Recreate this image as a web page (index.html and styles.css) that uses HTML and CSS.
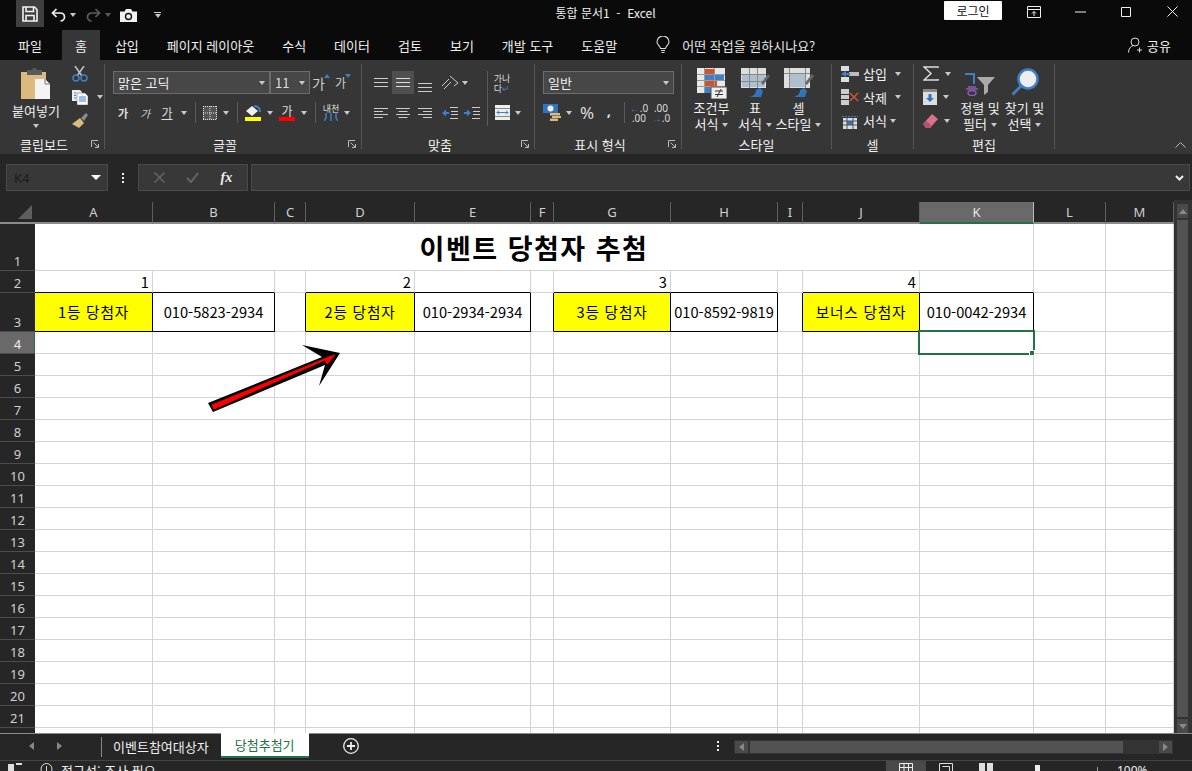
FILE: index.html
```html
<!DOCTYPE html>
<html lang="ko">
<head>
    <meta charset="UTF-8">
    <meta name="viewport" content="width=device-width, initial-scale=1.0">
    <title>통합 문서1 - Excel</title>
    <link rel="stylesheet" href="styles.css">
</head>
<body>
    <header class="titlebar">
        <div class="qat">
            <span class="qat-save">
                <svg width="16" height="16" viewBox="0 0 16 16" fill="none" stroke="#f2f2f2" stroke-width="1.6"><path d="M1 1h11.5L15 3.500V15H1z"/><path d="M4 1v4.500h7.500V1M4 15V9.500h8V15"/></svg>
            </span>
            <svg class="qat-undo" width="15" height="14" viewBox="0 0 15 14" fill="none" stroke="#f2f2f2" stroke-width="1.7"><path d="M5.500 1 1.500 5l4 4"/><path d="M2 5h7c3 0 4.500 2 4.500 4S12 13 9.500 13"/></svg>
            <i class="caret caret-qat"></i>
            <svg class="qat-redo" width="15" height="14" viewBox="0 0 15 14" fill="none" stroke="#5c5c5c" stroke-width="1.7"><path d="M9.500 1l4 4-4 4"/><path d="M13 5H6C3 5 1.500 7 1.500 9S3 13 5.500 13"/></svg>
            <i class="caret caret-qat dim"></i>
            <svg class="qat-cam" width="17" height="13" viewBox="0 0 17 13"><path d="M0 2.500h4.500L6 0h5l1.500 2.500H17V13H0z" fill="#f2f2f2"/><circle cx="8.500" cy="7.500" r="3" fill="none" stroke="#111" stroke-width="1.400"/></svg>
            <span class="qat-more"><b></b><i class="caret"></i></span>
        </div>
        <div class="doc-title">통합 문서1 &nbsp;-&nbsp; Excel</div>
        <div class="win">
            <button class="login">로그인</button>
            <span class="win-btn"><svg width="14" height="12" viewBox="0 0 14 12" fill="none" stroke="#eee"><path d="M.5.500h13v11H.5zM.5 3.500h13"/><path d="M7 10V5.500M5 7.500l2-2 2 2"/></svg></span>
            <span class="win-btn"><svg width="11" height="2" viewBox="0 0 11 2"><path d="M0 1h11" stroke="#eee"/></svg></span>
            <span class="win-btn"><svg width="10" height="10" viewBox="0 0 10 10"><path d="M.5.500h9v9h-9z" fill="none" stroke="#eee"/></svg></span>
            <span class="win-btn"><svg width="11" height="11" viewBox="0 0 11 11"><path d="M.5.500l10 10M10.500.500l-10 10" stroke="#eee"/></svg></span>
        </div>
    </header>

    <nav class="tabs">
        <span class="tab tab-file">파일</span>
        <span class="tab active">홈</span>
        <span class="tab">삽입</span>
        <span class="tab">페이지 레이아웃</span>
        <span class="tab">수식</span>
        <span class="tab">데이터</span>
        <span class="tab">검토</span>
        <span class="tab">보기</span>
        <span class="tab">개발 도구</span>
        <span class="tab">도움말</span>
        <span class="tell">
            <svg width="14" height="18" viewBox="0 0 14 18" fill="none" stroke="#ddd" stroke-width="1.100"><path d="M4.500 12.500C4 9.500 1 9 1 6a6 6 0 0 1 12 0c0 3-3 3.500-3.500 6.500z"/><path d="M5 14.500h4M5.500 16.500h3"/></svg>
            어떤 작업을 원하시나요?
        </span>
        <span class="share">
            <svg width="15" height="16" viewBox="0 0 15 16" fill="none" stroke="#ddd"><circle cx="7" cy="5" r="4"/><path d="M.5 15.500c0-4 2.500-6.500 5-7M11.500 10.500v5M9 13h5"/></svg>
            공유
        </span>
    </nav>

    <section class="ribbon">
        <div class="group g-clip">
            <div class="body clip-body">
                <div class="paste">
                    <svg width="30" height="31" viewBox="0 0 30 31"><path d="M0 4h25v27H0z" fill="#dcb97c"/><path d="M6 2h5l1-2h3l1 2h5v5H6z" fill="#5a5a5a"/><path d="M14 11h10l5 5v15H14z" fill="#f4f4f4"/><path d="M24 11v5h5" fill="none" stroke="#777"/></svg>
                    <span>붙여넣기</span>
                    <i class="caret"></i>
                </div>
                <div class="clip-tools">
                    <span class="clip-row"><svg width="16" height="16" viewBox="0 0 16 16" fill="none"><path d="M3 0l7 10M12 0 5 10" stroke="#c4c4c4" stroke-width="1.500"/><circle cx="4" cy="12" r="3" stroke="#3d80c8" stroke-width="1.500"/><circle cx="12" cy="12" r="3" stroke="#3d80c8" stroke-width="1.500"/></svg></span>
                    <span class="clip-row"><svg width="16" height="15" viewBox="0 0 16 15"><path d="M0 0h8l2 2v9H0z" fill="#eee"/><path d="M5 3h8l3 3v9H5z" fill="#fff" stroke="#555" stroke-width=".5"/><path d="M2 3h2M2 5.500h2M2 8h2M7 7h7M7 9h7M7 11h7" stroke="#3d80c8"/></svg><i class="caret caret-gap"></i></span>
                    <span class="clip-row"><svg width="16" height="15" viewBox="0 0 16 15"><path d="M0 11l8-6 4 5-5 5z" fill="#dcb97c"/><path d="M9 5l5-5 2 2-4 6z" fill="#8a8a8a"/></svg></span>
                </div>
            </div>
            <div class="foot"><span class="label">클립보드</span><span class="launcher"><svg width="8" height="8" viewBox="0 0 8 8" fill="none" stroke="#bbb"><path d="M.5 7V.5H7M2.500 2.500 7 7M4 7.500h3.500V4"/></svg></span></div>
        </div>

        <div class="group g-font">
            <div class="body">
                <div class="row row-top font-top">
                    <div class="select font-name"><span>맑은 고딕</span><i class="caret"></i></div>
                    <div class="select font-size"><span>11</span><i class="caret"></i></div>
                    <span class="tool w22 size-btn">가<i class="tri up"></i></span>
                    <span class="tool w22 size-btn small">가<i class="tri down"></i></span>
                </div>
                <div class="row row-low">
                    <span class="tool w22 fs-b">가</span>
                    <span class="tool w22 fs-i">가</span>
                    <span class="tool w22 fs-u">가</span>
                    <span class="tool w12"><i class="caret"></i></span>
                    <b class="sep sep-a"></b>
                    <span class="tool w20"><svg width="14" height="14" viewBox="0 0 14 14"><path d="M0 0h14v14H0z" fill="#555"/><path d="M0 .5h14M0 13.500h14M.5 0v14M13.500 0v14M7 0v14M0 7h14" stroke="#e4e4e4" stroke-dasharray="1 1"/></svg></span>
                    <span class="tool w12"><i class="caret"></i></span>
                    <b class="sep sep-b"></b>
                    <span class="tool w22 stack"><svg width="16" height="11" viewBox="0 0 16 11"><path d="M1 6l6-5 6 5-6 5z" fill="#f0f0f0"/><path d="M9 1c4 0 6 2 6 6" fill="none" stroke="#3d80c8" stroke-width="2"/></svg><i class="swatch yellow"></i></span>
                    <span class="tool w12"><i class="caret"></i></span>
                    <span class="tool w22 stack"><em class="swatch-text">가</em><i class="swatch red"></i></span>
                    <span class="tool w12"><i class="caret"></i></span>
                    <b class="sep sep-c"></b>
                    <span class="tool w20 stack"><em class="mini-text">내천</em><svg width="14" height="8" viewBox="0 0 14 8"><path d="M2 0v5L0 8M7 0v8M12 0v5l2 3" stroke="#3d80c8" stroke-width="1.500" fill="none"/></svg></span>
                    <span class="tool w12"><i class="caret"></i></span>
                </div>
            </div>
            <div class="foot"><span class="label">글꼴</span><span class="launcher"><svg width="8" height="8" viewBox="0 0 8 8" fill="none" stroke="#bbb"><path d="M.5 7V.5H7M2.500 2.500 7 7M4 7.500h3.500V4"/></svg></span></div>
        </div>

        <div class="group g-align">
            <div class="body align-body">
                <div class="align-left">
                    <div class="row row-top">
                        <span class="tool w22"><svg width="14" height="9" viewBox="0 0 14 9"><path d="M0 .5h14M0 4.500h14M0 8.500h14" stroke="#ccc"/></svg></span>
                        <span class="tool w22 on"><svg width="14" height="9" viewBox="0 0 14 9"><path d="M0 .5h14M0 4.500h14M0 8.500h14" stroke="#ddd"/></svg></span>
                        <span class="tool w22 v-low"><svg width="14" height="9" viewBox="0 0 14 9"><path d="M0 .5h14M0 4.500h14M0 8.500h14" stroke="#ccc"/></svg></span>
                        <span class="tool w20 orient"><svg width="18" height="16" viewBox="0 0 18 16" fill="none"><path d="M1 11l7-7M3 14l7-7" stroke="#ccc"/><path d="M9 1l8 7-4 3" stroke="#ccc"/></svg></span>
                        <span class="tool w10"><i class="caret"></i></span>
                    </div>
                    <div class="row row-mid">
                        <span class="tool w22"><svg width="14" height="10" viewBox="0 0 14 10"><path d="M0 .5h14M0 3.500h9M0 6.500h14M0 9.500h9" stroke="#ccc"/></svg></span>
                        <span class="tool w22"><svg width="14" height="10" viewBox="0 0 14 10"><path d="M0 .5h14M2.500 3.500h9M0 6.500h14M2.500 9.500h9" stroke="#ccc"/></svg></span>
                        <span class="tool w22"><svg width="14" height="10" viewBox="0 0 14 10"><path d="M0 .5h14M5 3.500h9M0 6.500h14M5 9.500h9" stroke="#ccc"/></svg></span>
                        <span class="tool w22 indent-a"><svg width="16" height="12" viewBox="0 0 16 12"><path d="M8 .5h8M8 11.500h8M9 4.500h7M9 7.500h7" stroke="#ccc"/><path d="M0 6l4-3.500V5h3v2H4v2.500z" fill="#3d80c8"/></svg></span>
                        <span class="tool w22"><svg width="16" height="12" viewBox="0 0 16 12"><path d="M8 .5h8M8 11.500h8M9 4.500h7M9 7.500h7" stroke="#ccc"/><path d="M7 6 3 2.500V5H0v2h3v2.500z" fill="#3d80c8"/></svg></span>
                    </div>
                </div>
                <b class="sep sep-tall"></b>
                <div class="align-right">
                    <span class="tool w20 wrap-btn"><em class="wrap-text">가나<br>다<u>↵</u></em></span>
                    <span class="row merge-row">
                        <span class="tool w20"><svg width="15" height="15" viewBox="0 0 15 15"><path d="M0 0h15v15H0z" fill="#eee"/><path d="M0 3.500h15M0 11.500h15" stroke="#888"/><path d="M2 7.500h11" stroke="#3d80c8"/><path d="M4 5.500l-2 2 2 2M11 5.500l2 2-2 2" fill="none" stroke="#3d80c8"/></svg></span>
                        <span class="tool w12"><i class="caret"></i></span>
                    </span>
                </div>
            </div>
            <div class="foot"><span class="label">맞춤</span><span class="launcher"><svg width="8" height="8" viewBox="0 0 8 8" fill="none" stroke="#bbb"><path d="M.5 7V.5H7M2.500 2.500 7 7M4 7.500h3.500V4"/></svg></span></div>
        </div>

        <div class="group g-number">
            <div class="body">
                <div class="select number-format"><span>일반</span><i class="caret"></i></div>
                <div class="row row-low num-tools">
                    <span class="tool w22"><svg width="18" height="17" viewBox="0 0 18 17"><path d="M0 0h15v9H0z" fill="#2f74bd"/><ellipse cx="7.500" cy="4.500" rx="3" ry="3" fill="#eef"/><path d="M7 9h10v2.500H7zM9 12h9v2H9zM7 14.500h8V17H7z" fill="#dcb97c"/></svg></span>
                    <span class="tool w12"><i class="caret"></i></span>
                    <span class="tool w22 pct">%</span>
                    <span class="tool w22 comma">,</span>
                    <b class="sep sep-d"></b>
                    <span class="tool w22 dec"><em><u class="arr">←</u>.0</em><em>.00</em></span>
                    <span class="tool w22 dec"><em>.00</em><em><u class="arr">→</u>.0</em></span>
                </div>
            </div>
            <div class="foot"><span class="label">표시 형식</span><span class="launcher"><svg width="8" height="8" viewBox="0 0 8 8" fill="none" stroke="#bbb"><path d="M.5 7V.5H7M2.500 2.500 7 7M4 7.500h3.500V4"/></svg></span></div>
        </div>

        <div class="group g-styles">
            <div class="body big-body">
                <div class="big w47">
                    <span class="big-icon"><svg width="30" height="31" viewBox="0 0 30 31"><path d="M0 0h28v25H0z" fill="#e8e8e8"/><path d="M8 1h9v5H8z" fill="#d0522b"/><path d="M8 7h19v5H8z" fill="#3d80c8"/><path d="M8 13h12v5H8z" fill="#d0522b"/><path d="M8 19h7v6H8z" fill="#3d80c8"/><path d="M0 6.500h28M0 12.500h28M0 18.500h28M7.500 0v25M17.500 0v25" stroke="#999"/><path d="M14 19h16v12H14z" fill="#eee" stroke="#555"/><path d="M18 23h8M18 26.500h8M24 21l-4 8" stroke="#333" fill="none"/></svg></span>
                    <span>조건부</span>
                    <span>서식<i class="caret"></i></span>
                </div>
                <div class="big w40">
                    <span class="big-icon"><svg width="29" height="29" viewBox="0 0 29 29"><path d="M0 0h25v20H0z" fill="#dedede"/><path d="M1 7h23v12H1z" fill="#aebfd0"/><path d="M0 6.500h25M0 13.500h25M8.500 0v20M16.500 0v20" stroke="#888"/><path d="M20 15l7-9 2 2-7 9z" fill="#666"/><path d="M7 29c5 0 8-3 8-7l4-2 3 3-2 6z" fill="#2f74bd"/></svg></span>
                    <span>표</span>
                    <span>서식<i class="caret"></i></span>
                </div>
                <div class="big w47">
                    <span class="big-icon"><svg width="30" height="29" viewBox="0 0 30 29"><path d="M0 0h26v20H0z" fill="#dedede"/><path d="M6 6h15v13H6z" fill="#aebfd0"/><path d="M0 5.500h26M5.500 0v20M21.500 0v20" stroke="#888"/><path d="M21 15l7-9 2 2-7 9z" fill="#666"/><path d="M8 29c5 0 8-3 8-7l4-2 3 3-2 6z" fill="#2f74bd"/></svg></span>
                    <span>셀</span>
                    <span>스타일<i class="caret"></i></span>
                </div>
            </div>
            <div class="foot"><span class="label">스타일</span></div>
        </div>

        <div class="group g-cells">
            <div class="body cells-body">
                <div class="cell-row">
                    <svg width="18" height="16" viewBox="0 0 18 16"><path d="M0 0h8v5H0zM0 11h8v5H0z" fill="#ddd"/><path d="M8 6h10v4H8z" fill="#bbb"/><path d="M0 8l5-3v2h4v2H5v2z" fill="#3d80c8"/></svg>
                    <span>삽입</span><i class="caret gap-a"></i>
                </div>
                <div class="cell-row">
                    <svg width="18" height="16" viewBox="0 0 18 16"><path d="M0 0h8v5H0zM0 11h8v5H0zM0 6h8v4H0z" fill="#ccc"/><path d="M9 4l8 8M17 4l-8 8" stroke="#d0522b" stroke-width="1.600"/></svg>
                    <span>삭제</span><i class="caret gap-a"></i>
                </div>
                <div class="cell-row">
                    <svg width="18" height="16" viewBox="0 0 18 16"><path d="M1 3.500h16" stroke="#3d80c8" stroke-dasharray="2 1"/><path d="M2 5h14v11H2z" fill="#ddd"/><path d="M6 8h6v4H6z" fill="#2f74bd"/><path d="M2 8h14M2 12h14M6 5v11M12 5v11" stroke="#555"/></svg>
                    <span>서식</span><i class="caret gap-b"></i>
                </div>
            </div>
            <div class="foot"><span class="label">셀</span></div>
        </div>

        <div class="group g-edit">
            <div class="body edit-body">
                <div class="edit-col">
                    <span class="edit-row"><svg width="16" height="15" viewBox="0 0 16 15" fill="none"><path d="M15 2V1H1l7 6.500L1 14h14v-1" stroke="#ddd" stroke-width="1.500"/></svg><i class="caret"></i></span>
                    <span class="edit-row"><svg width="14" height="16" viewBox="0 0 14 16"><path d="M0 0h14v16H0z" fill="#ddd"/><path d="M0 0h14v3H0z" fill="#888"/><path d="M5.500 5h3v4H11l-4 4-4-4h2.500z" fill="#2f74bd"/></svg><i class="caret"></i></span>
                    <span class="edit-row"><svg width="15" height="14" viewBox="0 0 15 14"><path d="M0 10l9-10 6 5-8 9H3z" fill="#d9718a"/><path d="M0 10l3-3 5 4-2 3H3z" fill="#b45068"/></svg><i class="caret"></i></span>
                </div>
                <div class="big w46">
                    <span class="big-icon sort-icon"><svg width="30" height="24" viewBox="0 0 30 24"><path d="M0 2h9v10" fill="none" stroke="#3d80c8" stroke-width="2"/><path d="M3 15h8M1 17h12" stroke="#8a5bb5" stroke-width="1.300"/><ellipse cx="7" cy="21" rx="4" ry="2.500" fill="none" stroke="#8a5bb5" stroke-width="1.500"/><path d="M12 5h18l-7 8v7l-4 3V13z" fill="#aaa"/></svg></span>
                    <span>정렬 및</span>
                    <span>필터<i class="caret"></i></span>
                </div>
                <div class="big w43">
                    <span class="big-icon find-icon"><svg width="28" height="28" viewBox="0 0 28 28"><circle cx="17" cy="11" r="9.500" fill="#eee" stroke="#3d80c8" stroke-width="2.500"/><path d="M10 18 1.500 26.500" stroke="#3d80c8" stroke-width="2.800"/></svg></span>
                    <span>찾기 및</span>
                    <span>선택<i class="caret"></i></span>
                </div>
            </div>
            <div class="foot"><span class="label">편집</span></div>
        </div>

        <svg class="collapse" width="11" height="6" viewBox="0 0 11 6" fill="none" stroke="#bbb"><path d="M.5 5.500l5-5 5 5"/></svg>
    </section>

    <section class="formula">
        <div class="namebox"><span>K4</span><i class="caret white"></i></div>
        <div class="dots"><i></i><i></i><i></i></div>
        <div class="fx-box">
            <svg width="11" height="11" viewBox="0 0 11 11"><path d="M.5.500l10 10M10.500.500l-10 10" stroke="#666" stroke-width="1.500"/></svg>
            <svg width="13" height="11" viewBox="0 0 13 11" fill="none"><path d="M1 6l4 4 7-9" stroke="#666" stroke-width="2"/></svg>
            <span class="fx">fx</span>
        </div>
        <div class="fx-input"><svg width="9" height="6" viewBox="0 0 9 6" fill="none"><path d="M1 1l3.500 3.500L8 1" stroke="#eee" stroke-width="2"/></svg></div>
    </section>

    <main class="sheet-area">
        <div class="grid-wrap">
            <table class="grid">
                <colgroup>
                    <col class="c-head"><col class="c-a"><col class="c-b"><col class="c-c"><col class="c-d"><col class="c-e"><col class="c-f"><col class="c-g"><col class="c-h"><col class="c-i"><col class="c-j"><col class="c-k"><col class="c-l"><col class="c-m">
                </colgroup>
                <thead>
                    <tr class="r-head">
                        <th class="corner"><i></i></th>
                        <th>A</th><th>B</th><th>C</th><th>D</th><th>E</th><th>F</th><th>G</th><th>H</th><th>I</th><th>J</th><th class="cur-col">K</th><th>L</th><th>M</th>
                    </tr>
                </thead>
                <tbody>
                    <tr class="r1"><th>1</th><td colspan="11" class="title-cell">이벤트 당첨자 추첨</td><td></td><td></td></tr>
                    <tr class="r2"><th>2</th><td class="num ab">1</td><td class="ab"></td><td></td><td class="num ab">2</td><td class="ab"></td><td></td><td class="num ab">3</td><td class="ab"></td><td></td><td class="num ab">4</td><td class="ab"></td><td></td><td></td></tr>
                    <tr class="r3"><th>3</th><td class="win-label">1등 당첨자</td><td class="win-phone">010-5823-2934</td><td class="lf"></td><td class="win-label">2등 당첨자</td><td class="win-phone">010-2934-2934</td><td class="lf"></td><td class="win-label">3등 당첨자</td><td class="win-phone">010-8592-9819</td><td class="lf"></td><td class="win-label">보너스 당첨자</td><td class="win-phone">010-0042-2934</td><td></td><td></td></tr>
                    <tr><th class="cur-row">4</th><td></td><td></td><td></td><td></td><td></td><td></td><td></td><td></td><td></td><td></td><td></td><td></td><td></td></tr>
                    <tr><th>5</th><td></td><td></td><td></td><td></td><td></td><td></td><td></td><td></td><td></td><td></td><td></td><td></td><td></td></tr>
                    <tr><th>6</th><td></td><td></td><td></td><td></td><td></td><td></td><td></td><td></td><td></td><td></td><td></td><td></td><td></td></tr>
                    <tr><th>7</th><td></td><td></td><td></td><td></td><td></td><td></td><td></td><td></td><td></td><td></td><td></td><td></td><td></td></tr>
                    <tr><th>8</th><td></td><td></td><td></td><td></td><td></td><td></td><td></td><td></td><td></td><td></td><td></td><td></td><td></td></tr>
                    <tr><th>9</th><td></td><td></td><td></td><td></td><td></td><td></td><td></td><td></td><td></td><td></td><td></td><td></td><td></td></tr>
                    <tr><th>10</th><td></td><td></td><td></td><td></td><td></td><td></td><td></td><td></td><td></td><td></td><td></td><td></td><td></td></tr>
                    <tr><th>11</th><td></td><td></td><td></td><td></td><td></td><td></td><td></td><td></td><td></td><td></td><td></td><td></td><td></td></tr>
                    <tr><th>12</th><td></td><td></td><td></td><td></td><td></td><td></td><td></td><td></td><td></td><td></td><td></td><td></td><td></td></tr>
                    <tr><th>13</th><td></td><td></td><td></td><td></td><td></td><td></td><td></td><td></td><td></td><td></td><td></td><td></td><td></td></tr>
                    <tr><th>14</th><td></td><td></td><td></td><td></td><td></td><td></td><td></td><td></td><td></td><td></td><td></td><td></td><td></td></tr>
                    <tr><th>15</th><td></td><td></td><td></td><td></td><td></td><td></td><td></td><td></td><td></td><td></td><td></td><td></td><td></td></tr>
                    <tr><th>16</th><td></td><td></td><td></td><td></td><td></td><td></td><td></td><td></td><td></td><td></td><td></td><td></td><td></td></tr>
                    <tr><th>17</th><td></td><td></td><td></td><td></td><td></td><td></td><td></td><td></td><td></td><td></td><td></td><td></td><td></td></tr>
                    <tr><th>18</th><td></td><td></td><td></td><td></td><td></td><td></td><td></td><td></td><td></td><td></td><td></td><td></td><td></td></tr>
                    <tr><th>19</th><td></td><td></td><td></td><td></td><td></td><td></td><td></td><td></td><td></td><td></td><td></td><td></td><td></td></tr>
                    <tr><th>20</th><td></td><td></td><td></td><td></td><td></td><td></td><td></td><td></td><td></td><td></td><td></td><td></td><td></td></tr>
                    <tr><th>21</th><td></td><td></td><td></td><td></td><td></td><td></td><td></td><td></td><td></td><td></td><td></td><td></td><td></td></tr>
                    <tr><th></th><td></td><td></td><td></td><td></td><td></td><td></td><td></td><td></td><td></td><td></td><td></td><td></td><td></td></tr>
                </tbody>
            </table>
            <div class="selection"><i></i></div>
            <svg class="arrow" width="150" height="85" viewBox="200 335 150 85">
                <path d="M208 403 322 357 302 345 340 353 319 386 325 365 213 412z" fill="#000"/>
                <path d="M212 405 329 357 335 355 327 364 325 360 214 409z" fill="#f00" stroke="#f00"/>
            </svg>
        </div>
        <div class="vscroll">
            <span class="sb-btn"><i class="tri-sb up"></i></span>
            <span class="sb-thumb"></span>
            <span class="sb-btn"><i class="tri-sb down"></i></span>
        </div>
    </main>

    <section class="sheetbar">
        <div class="sheet-nav">
            <i class="tri-sb left"></i>
            <i class="tri-sb right"></i>
        </div>
        <b class="sheet-sep"></b>
        <span class="sheet-tab">이벤트참여대상자</span>
        <span class="sheet-tab current">당첨추첨기</span>
        <span class="add-sheet"><svg width="16" height="16" viewBox="0 0 16 16" fill="none" stroke="#eee"><circle cx="8" cy="8" r="7.300" stroke-width="1.300"/><path d="M8 4v8M4 8h8" stroke-width="1.800"/></svg></span>
        <div class="dots sheet-dots"><i></i><i></i><i></i></div>
        <div class="hscroll">
            <span class="hs-btn"><i class="tri-sb left"></i></span>
            <span class="hs-thumb"></span>
            <span class="hs-btn"><i class="tri-sb right"></i></span>
        </div>
    </section>

    <footer class="status">
        <svg class="st-macro" width="14" height="9" viewBox="0 0 14 9"><path d="M0 2h6v7H0zM8 1h6v2H8z" fill="#ddd"/></svg>
        <svg class="st-acc" width="13" height="9" viewBox="0 0 13 9" fill="none" stroke="#ddd"><circle cx="6.500" cy="6" r="5.500"/><path d="M6.500 3v6"/></svg>
        <span class="st-text">접근성: 조사 필요</span>
        <span class="st-view on"><svg width="14" height="9" viewBox="0 0 14 9" fill="none" stroke="#eee"><path d="M.5.500h13v9H.5zM0 4.500h14M5 0v9M9.500 0v9"/></svg></span>
        <span class="st-view"><svg width="14" height="9" viewBox="0 0 14 9" fill="none" stroke="#ddd"><path d="M.5.500h13v9H.5zM3.500 3.500h7v6"/></svg></span>
        <span class="st-view"><svg width="14" height="9" viewBox="0 0 14 9"><path d="M0 0h6v9H0zM8 0h6v9H8z" fill="#ddd"/></svg></span>
        <i class="st-thumb"></i>
        <i class="st-tick"></i>
        <span class="st-zoom">100%</span>
    </footer>
</body>
</html>
```

FILE: styles.css
```css
* {
    box-sizing: border-box;
    margin: 0;
    padding: 0;
}

html, body {
    width: 1192px;
    height: 771px;
    overflow: hidden;
}

body {
    display: flex;
    flex-direction: column;
    background-color: #262626;
    color: #f0f0f0;
    font-family: "Noto Sans CJK KR", "Noto Sans", sans-serif;
    font-size: 13px;
}

i, em, u {
    font-style: normal;
    text-decoration: none;
}

svg {
    display: block;
    flex: none;
}

.caret {
    display: inline-block;
    width: 0;
    height: 0;
    border-top: 4px solid #c8c8c8;
    border-left: 3.5px solid transparent;
    border-right: 3.5px solid transparent;
}

.caret.dim {
    border-top-color: #5c5c5c;
}

.caret.white {
    border-top-color: #fff;
    border-left-width: 5px;
    border-right-width: 5px;
    border-top-width: 5px;
}

/* title bar */
.titlebar {
    display: flex;
    flex: none;
    align-items: center;
    height: 30px;
    background-color: #0a0a0a;
}

.qat {
    display: flex;
    flex: 1;
    align-items: center;
    height: 100%;
    padding-left: 16px;
}

.qat-save {
    display: flex;
    align-items: center;
    justify-content: center;
    width: 28px;
    height: 27px;
    margin-top: -3px;
    background-color: #404040;
}

.qat-undo {
    margin-left: 7px;
}

.caret-qat {
    margin-left: 4px;
}

.qat-redo {
    margin-left: 10px;
}

.qat-cam {
    margin-left: 9px;
}

.qat-more {
    display: flex;
    flex-direction: column;
    align-items: center;
    gap: 1px;
    margin-left: 17px;
}

.qat-more b {
    width: 7px;
    height: 1px;
    background-color: #ccc;
}

.doc-title {
    flex: none;
    font-size: 12px;
    margin-top: -5px;
}

.win {
    display: flex;
    flex: 1;
    align-items: center;
    justify-content: flex-end;
    height: 100%;
    margin-right: -3px;
}

.login {
    width: 58px;
    height: 19px;
    margin-right: 9px;
    margin-top: -9px;
    border: 0;
    border-radius: 1px;
    background-color: #fff;
    color: #111;
    font: 12px "Noto Sans CJK KR", sans-serif;
}

.win-btn {
    display: flex;
    align-items: center;
    justify-content: center;
    width: 46px;
    height: 23px;
    margin-top: -7px;
}

/* ribbon tabs */
.tabs {
    display: flex;
    flex: none;
    align-items: stretch;
    gap: 2px;
    height: 30px;
    padding-left: 5px;
    background-color: #0a0a0a;
}

.tab {
    display: flex;
    align-items: center;
    padding: 0 13px;
    font-size: 13px;
}

.tab-file {
    margin-right: 5px;
}

.tab.active {
    background-color: #363636;
}

.tell {
    display: flex;
    align-items: center;
    gap: 12px;
    margin-left: 24px;
    color: #e4e4e4;
}

.share {
    display: flex;
    align-items: center;
    gap: 4px;
    margin-left: auto;
    margin-right: 21px;
}

/* ribbon */
.ribbon {
    display: flex;
    flex: none;
    height: 94px;
    padding: 4px 0 5px;
    background-color: #363636;
}

.group {
    display: flex;
    flex: none;
    flex-direction: column;
    border-right: 1px solid #555;
}

.g-clip { width: 105px; }
.g-font { width: 257px; }
.g-align { width: 173px; }
.g-number { width: 147px; }
.g-styles { width: 150px; }
.g-cells { width: 82px; }
.g-edit { width: 141px; }

.body {
    flex: 1;
    min-height: 0;
    padding: 7px 0 0 7px;
}

.foot {
    display: flex;
    flex: none;
    align-items: center;
    height: 18px;
    margin-bottom: -4px;
}

.label {
    flex: 1;
    text-align: center;
    font-size: 13px;
    white-space: nowrap;
}

.launcher {
    display: flex;
    align-items: center;
    width: 16px;
    padding-left: 3px;
}

.collapse {
    align-self: flex-end;
    margin-left: auto;
    margin-right: 6px;
    margin-bottom: 1px;
}

.row {
    display: flex;
    align-items: center;
}

.row-top {
    height: 23px;
}

.row-low {
    height: 23px;
    margin-top: 7px;
}

.row-mid {
    height: 23px;
    margin-top: 7px;
}

.tool {
    display: flex;
    flex: none;
    align-items: center;
    justify-content: center;
    height: 23px;
    position: relative;
}

.w10 { width: 10px; }
.w12 { width: 12px; }
.w20 { width: 20px; }
.w22 { width: 22px; }

.tool.on {
    background-color: #4f4f4f;
}

.tool.stack {
    flex-direction: column;
}

.sep {
    display: block;
    flex: none;
    width: 1px;
    height: 21px;
    background-color: #5a5a5a;
}

.sep-a { margin: 0 4px 0 5px; }
.sep-b { margin: 0 4px 0 5px; }
.sep-c { margin: 0 5px; }
.sep-d { margin: 0 3px 0 4px; }

/* clipboard */
.clip-body {
    display: flex;
    padding: 0;
}

.paste {
    display: flex;
    flex: none;
    flex-direction: column;
    align-items: center;
    width: 72px;
    padding-top: 4px;
}

.paste span {
    margin-top: 3px;
    line-height: 18px;
    white-space: nowrap;
}

.paste .caret {
    margin-top: 4px;
}

.clip-tools {
    display: flex;
    flex-direction: column;
    margin-top: -2px;
}

.clip-row {
    display: flex;
    align-items: center;
    height: 23.5px;
}

.caret-gap {
    margin-left: 9px;
}

/* font */
.font-top {
    padding-left: 1px;
}

.select {
    display: flex;
    align-items: center;
    justify-content: space-between;
    height: 23px;
    padding: 0 4px;
    border: 1px solid #6c6c6c;
    background-color: #474747;
}

.font-name {
    width: 157px;
}

.font-size {
    width: 40px;
    color: #ddd;
}

.size-btn {
    color: #ccc;
    font-size: 14px;
}

.size-btn.small {
    font-size: 12px;
}

.tri {
    width: 0;
    height: 0;
    margin: -13px 0 0 -1px;
    border-left: 3px solid transparent;
    border-right: 3px solid transparent;
}

.tri.up {
    border-bottom: 4px solid #3d80c8;
}

.tri.down {
    border-top: 4px solid #3d80c8;
}

.fs-b {
    font-size: 11px;
    font-weight: 700;
    color: #ddd;
}

.fs-i {
    font-size: 11px;
    color: #ccc;
    font-style: italic;
}

.fs-u {
    font-size: 12px;
    color: #ddd;
    text-decoration: underline;
}

.swatch {
    width: 16px;
    height: 4px;
}

.swatch.yellow {
    background-color: #ff0;
    margin-top: 1px;
}

.swatch.red {
    background-color: #f00;
}

.swatch-text {
    font-size: 12px;
    line-height: 13px;
    color: #ddd;
}

.mini-text {
    font-size: 9px;
    line-height: 9px;
    color: #ddd;
}

/* alignment */
.align-body {
    display: flex;
    padding-left: 8px;
}

.align-left {
    flex: none;
    width: 113px;
}

.v-low {
    align-items: flex-end;
    padding-bottom: 2px;
}

.orient {
    margin-left: 4px;
}

.indent-a {
    margin-left: 3px;
}

.sep-tall {
    height: 55px;
    margin: 0 4px;
}

.align-right {
    display: flex;
    flex-direction: column;
    gap: 5px;
}

.wrap-btn {
    height: 25px;
}

.wrap-text {
    font-size: 9px;
    line-height: 10px;
    color: #ddd;
}

.wrap-text u {
    color: #3d80c8;
}

/* number */
.number-format {
    width: 131px;
    margin-left: 1px;
}

.num-tools {
    margin-left: -1px;
}

.pct {
    font-family: "Noto Sans", sans-serif;
    font-size: 17px;
    color: #ddd;
    margin-left: 1px;
}

.comma {
    font-family: "Noto Sans", sans-serif;
    font-size: 15px;
    font-weight: 700;
    color: #ddd;
    padding-bottom: 6px;
}

.dec {
    flex-direction: column;
    font-family: "Noto Sans", sans-serif;
    font-size: 10px;
    line-height: 10px;
    color: #ddd;
}

.arr {
    color: #3d80c8;
}

/* big buttons */
.big-body {
    display: flex;
    padding: 4px 0 0 6px;
}

.big {
    display: flex;
    flex: none;
    flex-direction: column;
    align-items: center;
    line-height: 16px;
    white-space: nowrap;
}

.w40 { width: 40px; }
.w43 { width: 43px; }
.w46 { width: 46px; }
.w47 { width: 47px; }

.big .caret {
    margin-left: 4px;
    vertical-align: middle;
}

.big-icon {
    display: block;
    height: 32px;
}

.sort-icon {
    padding-top: 4px;
}

/* cells */
.cells-body {
    margin-top: -2px;
    padding: 0 0 0 9px;
}

.cell-row {
    display: flex;
    align-items: center;
    height: 23.5px;
}

.cell-row span {
    margin-left: 4px;
}

.gap-a {
    margin-left: 8px;
}

.gap-b {
    margin-left: 3px;
}

/* editing */
.edit-body {
    display: flex;
    padding: 4px 0 0 9px;
}

.edit-col {
    display: flex;
    flex: none;
    flex-direction: column;
    width: 34px;
    margin-top: -6px;
}

.edit-row {
    display: flex;
    align-items: center;
    gap: 6px;
    height: 23.5px;
}

/* formula bar */
.formula {
    display: flex;
    flex: none;
    height: 46px;
    padding: 10px 2px 9px 6px;
    background-color: #262626;
}

.namebox,
.fx-box,
.fx-input {
    display: flex;
    align-items: center;
    border: 1px solid #4a4a4a;
    background-color: #383838;
}

.namebox {
    justify-content: space-between;
    width: 102px;
    padding: 0 6px 0 7px;
    color: #1b1b1b;
    font-family: "Noto Sans", sans-serif;
    font-size: 13px;
}

.dots {
    display: flex;
    flex-direction: column;
    align-items: center;
    justify-content: center;
    gap: 2px;
    width: 30px;
}

.dots i {
    width: 2px;
    height: 2px;
    background-color: #eee;
}

.fx-box {
    justify-content: space-around;
    width: 110px;
    padding: 0 4px;
}

.fx {
    color: #eee;
    font-family: "Liberation Serif", serif;
    font-style: italic;
    font-weight: 700;
    font-size: 14px;
}

.fx-input {
    flex: 1;
    justify-content: flex-end;
    margin-left: 3px;
    padding-right: 5px;
}

/* sheet */
.sheet-area {
    display: flex;
    flex: none;
    height: 533px;
}

.grid-wrap {
    position: relative;
    flex: none;
    width: 1174px;
    height: 533px;
    padding-top: 2px;
    overflow: hidden;
    background-color: #262626;
}

.grid {
    width: 1174px;
    table-layout: fixed;
    border-collapse: separate;
    border-spacing: 0;
    background-color: #fff;
    color: #000;
    font-size: 14.67px;
}

.c-head { width: 35px; }
.c-a { width: 118px; }
.c-b { width: 122px; }
.c-c { width: 31px; }
.c-d { width: 109px; }
.c-e { width: 116px; }
.c-f { width: 23px; }
.c-g { width: 117px; }
.c-h { width: 107px; }
.c-i { width: 25px; }
.c-j { width: 117px; }
.c-k { width: 114px; }
.c-l { width: 72px; }
.c-m { width: 68px; }

.grid td,
.grid th {
    height: 22px;
    padding: 0;
    line-height: 1;
}

.grid td {
    border-right: 1px solid #d4d4d4;
    border-bottom: 1px solid #d4d4d4;
}

.grid th {
    background-color: #262626;
    color: #cfcfcf;
    font-family: "Noto Sans", sans-serif;
    font-size: 13px;
    font-weight: 400;
    vertical-align: bottom;
    padding-bottom: 2px;
    border-bottom: 1px solid #4c4c4c;
}

.grid .r-head th {
    vertical-align: middle;
    padding-bottom: 0;
    border-right: 1px solid #5e5e5e;
    border-bottom: 2px solid #8a8a8a;
}

.grid .r-head .corner {
    position: relative;
    border-right: 0;
}

.corner i {
    position: absolute;
    right: 3px;
    bottom: 3px;
    width: 0;
    height: 0;
    border-left: 14px solid transparent;
    border-bottom: 14px solid #5e5e5e;
}

.grid .r-head .cur-col {
    background-color: #696969;
    color: #e8e8e8;
    border-bottom-color: #217346;
    border-right-color: #bbb;
}

.grid th.cur-row {
    background-color: #696969;
    color: #eee;
    box-shadow: inset -1px 0 #217346;
}

.grid .r1 td,
.grid .r1 th {
    height: 47px;
}

.grid .r3 td,
.grid .r3 th {
    height: 39px;
}

.grid .title-cell {
    text-align: center;
    font-size: 27px;
    font-weight: 700;
    letter-spacing: 1.5px;
}

.grid .num {
    text-align: right;
    padding-right: 3px;
    vertical-align: bottom;
    padding-bottom: 2px;
}

.grid .ab {
    border-bottom-color: #000;
}

.grid .lf {
    border-right-color: #000;
}

.grid .win-label,
.grid .win-phone {
    text-align: center;
    border-right-color: #000;
    border-bottom-color: #000;
    white-space: nowrap;
}

.grid .win-label {
    background-color: #ff0;
    letter-spacing: .8px;
}

.selection {
    position: absolute;
    left: 918px;
    top: 130px;
    width: 117px;
    height: 25px;
    border: 2px solid #217346;
}

.selection i {
    position: absolute;
    right: -2px;
    bottom: -3px;
    width: 6px;
    height: 6px;
    border: 1px solid #fff;
    background-color: #217346;
}

.arrow {
    position: absolute;
    left: 200px;
    top: 135px;
}

/* scrollbars */
.vscroll {
    display: flex;
    flex: none;
    flex-direction: column;
    gap: 2px;
    width: 18px;
    padding: 4px 4px 0 3px;
    background-color: #333;
}

.sb-btn {
    display: flex;
    flex: none;
    align-items: center;
    justify-content: center;
    height: 14px;
    background-color: #4a4a4a;
}

.sb-thumb {
    flex: 1;
    background-color: #525252;
}

.tri-sb {
    display: block;
    width: 0;
    height: 0;
}

.tri-sb.up {
    border-left: 4px solid transparent;
    border-right: 4px solid transparent;
    border-bottom: 5px solid #888;
}

.tri-sb.down {
    border-left: 4px solid transparent;
    border-right: 4px solid transparent;
    border-top: 5px solid #888;
}

.tri-sb.left {
    border-top: 4px solid transparent;
    border-bottom: 4px solid transparent;
    border-right: 5px solid #888;
}

.tri-sb.right {
    border-top: 4px solid transparent;
    border-bottom: 4px solid transparent;
    border-left: 5px solid #888;
}

/* sheet tabs */
.sheetbar {
    display: flex;
    flex: none;
    align-items: flex-start;
    height: 28px;
    border-top: 1px solid #8a8a8a;
    border-bottom: 1px solid #444;
    background-color: #262626;
}

.sheet-nav {
    display: flex;
    flex: none;
    align-items: center;
    gap: 23px;
    width: 101px;
    height: 24px;
    padding-left: 29px;
}

.sheet-sep {
    flex: none;
    width: 1px;
    height: 20px;
    margin-top: 3px;
    background-color: #888;
}

.sheet-tab {
    display: flex;
    flex: none;
    align-items: center;
    height: 24px;
    padding: 0 12px 0 11px;
    font-size: 13px;
    white-space: nowrap;
}

.sheet-tab.current {
    justify-content: center;
    width: 88px;
    padding: 0;
    margin-top: -1px;
    height: 25px;
    background-color: #fff;
    border-bottom: 2px solid #217346;
    color: #217346;
}

.add-sheet {
    flex: none;
    margin: 4px 0 0 34px;
}

.sheet-dots {
    height: 24px;
    margin-left: 344px;
}

.hscroll {
    display: flex;
    flex: none;
    width: 439px;
    height: 14px;
    margin: 6px 0 0 1px;
    padding: 1px;
    gap: 2px;
    background-color: #333;
}

.hs-btn {
    display: flex;
    flex: none;
    align-items: center;
    justify-content: center;
    width: 13px;
    background-color: #4a4a4a;
}

.hs-thumb {
    width: 373px;
    margin-right: auto;
    background-color: #525252;
}

/* status bar */
.status {
    display: flex;
    flex: none;
    align-items: flex-start;
    height: 10px;
    overflow: hidden;
    background-color: #262626;
    font-size: 13px;
    line-height: 16px;
}

.st-macro {
    margin: 1px 0 0 8px;
}

.st-acc {
    margin: 2px 0 0 18px;
}

.st-text {
    width: 825px;
    margin-left: 8px;
    margin-top: 2px;
}

.st-view {
    display: flex;
    justify-content: center;
    width: 40px;
    height: 10px;
    padding-top: 2px;
}

.st-view.on {
    background-color: #4a4a4a;
}

.st-thumb {
    width: 5px;
    height: 6px;
    margin: 4px 0 0 29px;
    background-color: #eee;
}

.st-tick {
    width: 1px;
    height: 4px;
    margin: 6px 0 0 57px;
    background-color: #999;
}

.st-zoom {
    margin: 2px 0 0 19px;
    font-family: "Noto Sans", sans-serif;
    font-size: 12px;
}
```
